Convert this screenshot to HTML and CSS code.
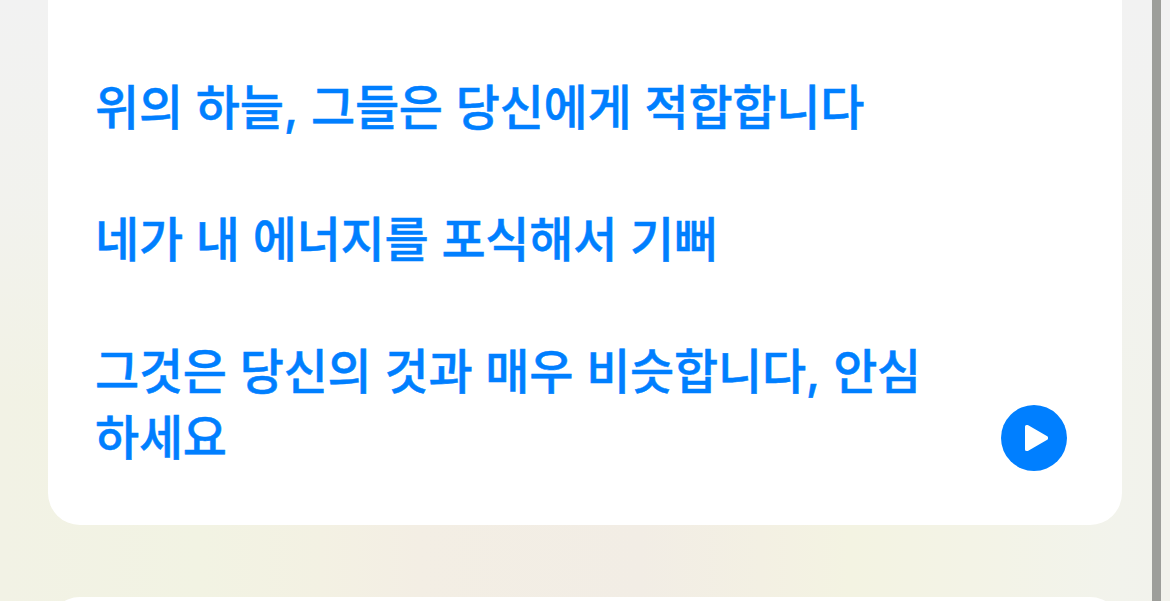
FILE: index.html
```html
<!DOCTYPE html>
<html lang="ko">
<head>
    <meta charset="UTF-8">
    <meta name="viewport" content="width=device-width, initial-scale=1.0">
    <title>번역</title>
    <link rel="stylesheet" href="styles.css">
</head>
<body>

<div class="page">
    <main class="content">
        <section class="card">
            <div class="translation">
                <p>위의 하늘<span class="comma">,</span> 그들은 당신에게 적합합니다</p>
                <p>네가 내 에너지를 포식해서 기뻐</p>
                <p>그것은 당신의 것과 매우 비슷합니다<span class="comma">,</span> 안심<br>하세요</p>
            </div>
            <button class="play-btn" aria-label="재생">
                <svg viewBox="0 0 66 66">
                    <path d="M25.5 21.5h1L45.5 32.5v1L26.5 44.5h-1z"/>
                </svg>
            </button>
        </section>
        <section class="card next-card"></section>
    </main>
    <div class="scrollbar"></div>
</div>

</body>
</html>
```

FILE: styles.css
```css
* {
    box-sizing: border-box;
}
body {
    margin: 0;
    font-family: "Noto Sans CJK KR", sans-serif;
    overflow: hidden;
}
.page {
    display: flex;
    height: 601px;
    overflow: hidden;
    background:
        linear-gradient(to bottom, #f2f2f2 0, rgba(242, 242, 240, 0.8) 200px, rgba(242, 242, 232, 0) 400px),
        linear-gradient(to right, #f2f2e5 0, #f2f3e3 200px, #f3f1e3 320px, #f3eee4 420px, #f2ede5 640px, #f3f0e3 760px, #f3f3e2 850px, #f3f3e7 1000px, #f2f3ec 1120px, #f2f2ec);
}
.content {
    flex: 1;
    padding: 0 30px 0 48px;
}
.card {
    display: flex;
    justify-content: space-between;
    align-items: flex-end;
    height: 525px;
    padding: 0 55px 54px 47px;
    border-radius: 0 0 32px 32px;
    background-color: #ffffff;
}
.translation {
    margin-bottom: 4px;
    font-size: 48px;
    font-weight: 500;
    line-height: 66px;
    letter-spacing: -0.24px;
    word-spacing: -0.2px;
    white-space: nowrap;
    color: #007fff;
    -webkit-text-stroke: 0.5px #007fff;
}
.translation p {
    margin: 0 0 66px;
}
.translation p:last-child {
    margin-bottom: 0;
}
.comma {
    font-family: "Inter", sans-serif;
    line-height: 1;
}
.play-btn {
    flex: none;
    width: 66px;
    height: 66px;
    padding: 0;
    border: none;
    border-radius: 50%;
    background-color: #007fff;
}
.play-btn svg {
    display: block;
    fill: #ffffff;
    stroke: #ffffff;
    stroke-width: 3;
    stroke-linejoin: round;
}
.next-card {
    margin-top: 72px;
    border-radius: 32px;
}
.scrollbar {
    width: 18px;
    border-left: 9px solid #9d9e9a;
}
```
